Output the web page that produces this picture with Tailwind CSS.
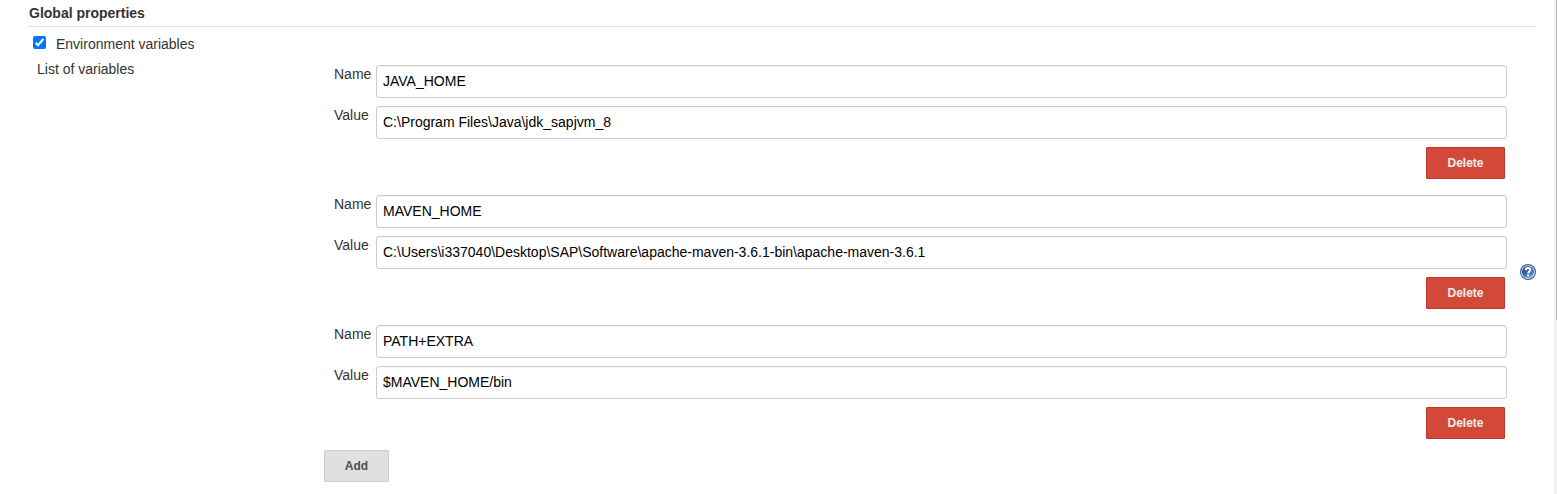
<!DOCTYPE html>
<html lang="en">
<head>
<meta charset="utf-8">
<title>Global properties</title>
<script src="https://cdn.jsdelivr.net/npm/@tailwindcss/browser@4"></script>
</head>
<body class="flex h-[494px] w-[1557px] overflow-hidden bg-white font-['Liberation_Sans',Arial,sans-serif] text-[14px] leading-5 text-[#333]">
<main class="flex w-[1554px] shrink-0 flex-col pl-[29px]">
  <h2 class="h-[27px] w-[1507px] border-b border-[#dedede] pt-[3px] font-bold">Global properties</h2>
  <label class="flex h-[30px] items-start pl-1 pt-[7px]">
    <span class="mt-[2px] flex size-[13px] items-center justify-center rounded-[2px] bg-[#0075ff]">
      <svg class="size-[13px]" viewBox="0 0 13 13" fill="none" stroke="#fff" stroke-width="2.1"><path d="M2.6 6.7 5.1 9.2 10.4 2.9"/></svg>
    </span>
    <span class="ml-[10px]">Environment variables</span>
  </label>
  <div class="flex">
    <div class="w-[295px] pl-2 pt-[2px]">List of variables</div>
    <div class="flex w-[1183px] flex-col pt-2">
      <section class="flex h-[130px] flex-col gap-2">
        <div class="flex h-[33px]"><label class="-mt-px w-[52px] pl-[10px]">Name</label><div class="h-[33px] flex-1 rounded-[3px] border border-[#ccc] px-[6px] pt-[5px] text-black shadow-[inset_0_1px_1px_rgba(0,0,0,0.05)]">JAVA_HOME</div></div>
        <div class="flex h-[33px]"><label class="-mt-px w-[52px] pl-[10px]">Value</label><div class="h-[33px] flex-1 rounded-[3px] border border-[#ccc] px-[6px] pt-[5px] text-black shadow-[inset_0_1px_1px_rgba(0,0,0,0.05)]">C:\Program Files\Java\jdk_sapjvm_8</div></div>
        <button class="mr-[2px] h-8 w-[79px] self-end rounded-[1px] border border-[#bd3a2b] bg-[#d24939] pb-px text-[12px] font-bold text-[#eee]">Delete</button>
      </section>
      <section class="flex h-[130px] flex-col gap-2">
        <div class="flex h-[33px]"><label class="-mt-px w-[52px] pl-[10px]">Name</label><div class="h-[33px] flex-1 rounded-[3px] border border-[#ccc] px-[6px] pt-[5px] text-black shadow-[inset_0_1px_1px_rgba(0,0,0,0.05)]">MAVEN_HOME</div></div>
        <div class="flex h-[33px]"><label class="-mt-px w-[52px] pl-[10px]">Value</label><div class="h-[33px] flex-1 rounded-[3px] border border-[#ccc] px-[6px] pt-[5px] text-black shadow-[inset_0_1px_1px_rgba(0,0,0,0.05)]">C:\Users\i337040\Desktop\SAP\Software\apache-maven-3.6.1-bin\apache-maven-3.6.1</div></div>
        <button class="mr-[2px] h-8 w-[79px] self-end rounded-[1px] border border-[#bd3a2b] bg-[#d24939] pb-px text-[12px] font-bold text-[#eee]">Delete</button>
      </section>
      <section class="flex h-[125px] flex-col gap-2">
        <div class="flex h-[33px]"><label class="-mt-px w-[52px] pl-[10px]">Name</label><div class="h-[33px] flex-1 rounded-[3px] border border-[#ccc] px-[6px] pt-[5px] text-black shadow-[inset_0_1px_1px_rgba(0,0,0,0.05)]">PATH+EXTRA</div></div>
        <div class="flex h-[33px]"><label class="-mt-px w-[52px] pl-[10px]">Value</label><div class="h-[33px] flex-1 rounded-[3px] border border-[#ccc] px-[6px] pt-[5px] text-black shadow-[inset_0_1px_1px_rgba(0,0,0,0.05)]">$MAVEN_HOME/bin</div></div>
        <button class="mr-[2px] h-8 w-[79px] self-end rounded-[1px] border border-[#bd3a2b] bg-[#d24939] pb-px text-[12px] font-bold text-[#eee]">Delete</button>
      </section>
      <button class="h-8 w-[65px] rounded-[1px] border border-[#ccc] bg-[#e0e0e0] pb-px text-[12px] font-bold text-[#4d4d4d]">Add</button>
    </div>
    <svg class="ml-[13px] mt-[207px] size-4" viewBox="0 0 16 16" role="img" aria-label="Help">
      <defs><linearGradient id="g" x1="0" y1="0" x2="0.8" y2="1"><stop offset="0" stop-color="#1f4485"/><stop offset="0.5" stop-color="#3a63a5"/><stop offset="1" stop-color="#7a9fd0"/></linearGradient></defs>
      <circle cx="8" cy="8" r="7.4" fill="#fff" stroke="#34609f" stroke-width="1.2"/>
      <circle cx="8" cy="8" r="6.1" fill="url(#g)"/>
      <path d="M5.7 6.300C5.700 4.500 6.600 3.900 8 3.900c1.500 0 2.300.8 2.300 1.900 0 1.600-2.100 1.700-2.100 3.500" fill="none" stroke="#fff" stroke-width="2"/>
      <rect x="7.100" y="10.400" width="2.100" height="2" fill="#fff"/>
    </svg>
  </div>
</main>
<div class="flex w-[3px] shrink-0 justify-end bg-[#f0f0f0]"><div class="h-[320px] w-px bg-[#bcbcbc]"></div></div>
</body>
</html>
